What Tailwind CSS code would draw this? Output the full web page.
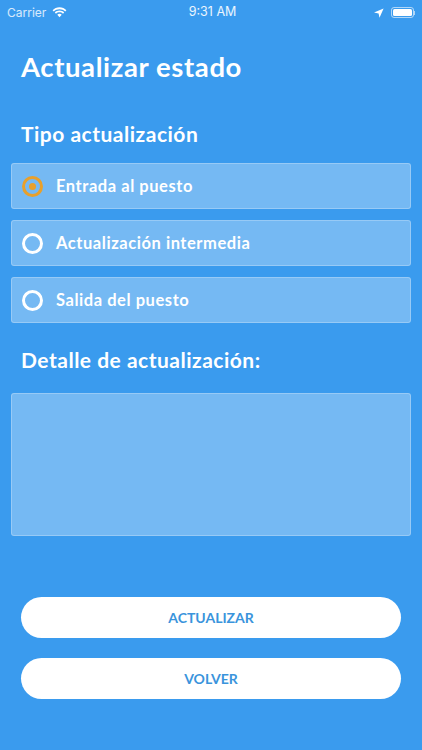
<!DOCTYPE html>
<html lang="en">
<head>
    <meta charset="UTF-8">
    <meta name="viewport" content="width=device-width, initial-scale=1.0">
    <title>Actualizar estado</title>
    <script src="https://cdn.jsdelivr.net/npm/@tailwindcss/browser@4"></script>
</head>
<body class="bg-[#3a9bee] w-[422px] h-[750px] overflow-hidden font-['Lato',sans-serif] text-white">
    <!-- status bar -->
    <div class="flex items-center justify-between h-[23px] pt-[2px] pl-[7px] pr-[7px] font-['Inter',sans-serif] text-[13px] text-white/90">
        <div class="flex items-center gap-[6px] w-[120px]">
            <span class="text-[12px] text-white/80">Carrier</span>
            <svg width="15" height="11" viewBox="0 0 15 11" fill="#fff"><path d="M7.5 2.2c2.2 0 4.2.9 5.7 2.3l1.2-1.3C12.6 1.4 10.2.3 7.5.3S2.4 1.4.6 3.2l1.2 1.3c1.5-1.4 3.5-2.3 5.7-2.3z"/><path d="M7.5 5.3c1.3 0 2.5.5 3.5 1.4l1.2-1.3C11 4.2 9.3 3.5 7.5 3.5S4 4.2 2.8 5.4L4 6.7c1-.9 2.2-1.4 3.5-1.4z"/><path d="M7.5 6.8c-.9 0-1.6.3-2.2.9l2.2 2.5 2.2-2.5c-.6-.6-1.3-.9-2.2-.9z"/></svg>
        </div>
        <span class="text-[12.5px] ml-[3px]">9:31 AM</span>
        <div class="flex items-center justify-end gap-[7px] w-[120px]">
            <svg width="10" height="10" viewBox="0 0 10 10" fill="#fff"><path d="M9.6.4 0 4.6l4.6.8.9 4.4z"/></svg>
            <div class="flex items-center">
                <div class="w-[23px] h-[11px] rounded-[3px] border border-white/60 p-[1px]"><div class="w-full h-full rounded-[1.5px] bg-white"></div></div>
                <div class="w-[1px] h-[4px] bg-white/60"></div>
            </div>
        </div>
    </div>

    <h1 class="mt-[27px] ml-[21px] text-[27.5px] leading-[34px] font-bold tracking-[0.6px]">Actualizar estado</h1>
    <h2 class="mt-[37px] ml-[21px] text-[21px] leading-[26px] font-bold tracking-[0.5px]">Tipo actualización</h2>

    <div class="mt-[16px] mx-[11px] flex flex-col gap-[11px]">
        <div class="flex items-center h-[46px] pl-[10px] gap-[13px] rounded-[3px] border border-white/25 bg-white/30">
            <span class="flex items-center justify-center w-[21px] h-[21px] rounded-full border-[3px] border-[#e8a02c]"><span class="w-[7px] h-[7px] rounded-full bg-[#e8a02c]"></span></span>
            <span class="text-[16.5px] font-bold tracking-[0.55px]">Entrada al puesto</span>
        </div>
        <div class="flex items-center h-[46px] pl-[10px] gap-[13px] rounded-[3px] border border-white/25 bg-white/30">
            <span class="w-[21px] h-[21px] rounded-full border-[3px] border-white"></span>
            <span class="text-[16.5px] font-bold tracking-[0.55px]">Actualización intermedia</span>
        </div>
        <div class="flex items-center h-[46px] pl-[10px] gap-[13px] rounded-[3px] border border-white/25 bg-white/30">
            <span class="w-[21px] h-[21px] rounded-full border-[3px] border-white"></span>
            <span class="text-[16.5px] font-bold tracking-[0.55px]">Salida del puesto</span>
        </div>
    </div>

    <h2 class="mt-[24px] ml-[21px] text-[21px] leading-[26px] font-bold tracking-[0.5px]">Detalle de actualización:</h2>

    <div class="mt-[20px] mx-[11px] h-[143px] rounded-[3px] border border-white/25 bg-white/30"></div>

    <div class="mt-[61px] mx-[21px] flex flex-col gap-[20px]">
        <button class="h-[41px] rounded-full bg-white text-[#3a94dc] text-[14px] font-bold">ACTUALIZAR</button>
        <button class="h-[41px] rounded-full bg-white text-[#3a94dc] text-[14px] font-bold">VOLVER</button>
    </div>
</body>
</html>
